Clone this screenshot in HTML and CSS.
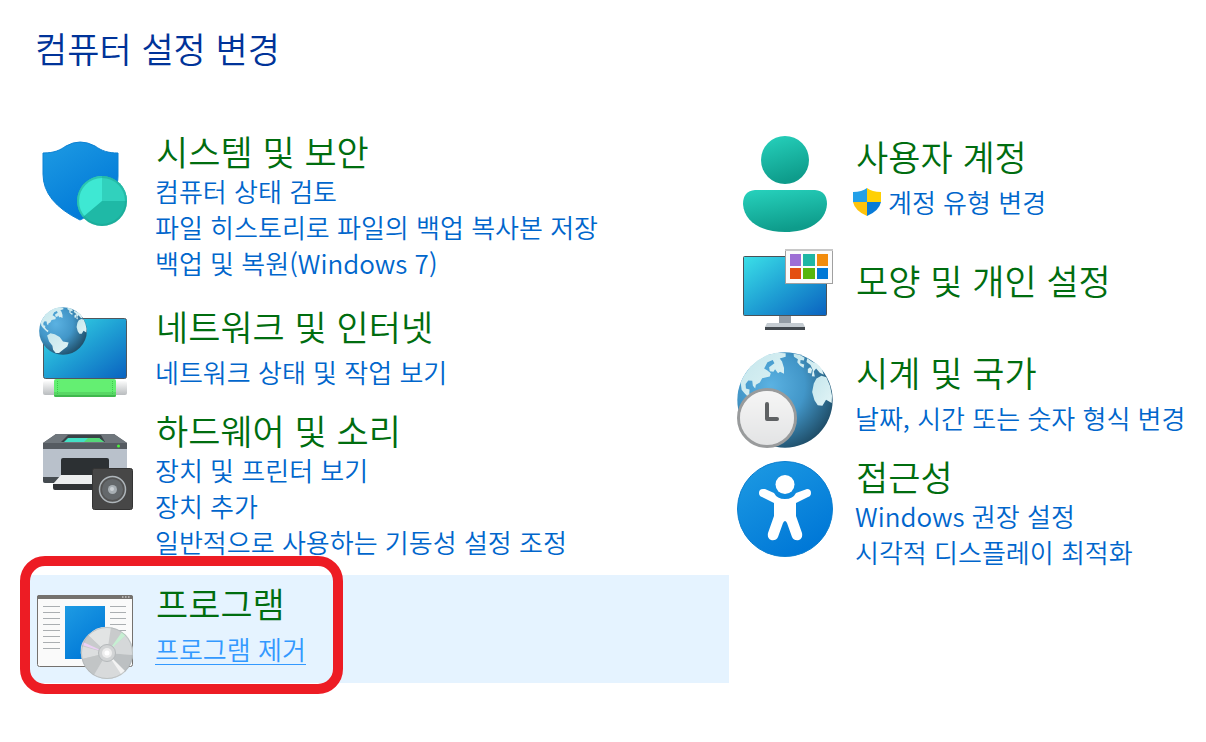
FILE: index.html
```html
<!DOCTYPE html>
<html lang="ko">
<head>
<meta charset="utf-8">
<meta name="viewport" content="width=device-width, initial-scale=1">
<title>컴퓨터 설정 변경</title>
<link rel="stylesheet" href="styles.css">
</head>
<body>
<svg class="defs" aria-hidden="true">
  <defs>
    <linearGradient id="blue" x1="0" y1="0" x2=".6" y2="1"><stop offset="0" stop-color="#1e9be3"/><stop offset="1" stop-color="#0078d7"/></linearGradient>
    <linearGradient id="screen" x1="0" y1="0" x2="1" y2="1"><stop offset="0" stop-color="#3be0e8"/><stop offset=".5" stop-color="#1fa0d4"/><stop offset="1" stop-color="#0a62c0"/></linearGradient>
    <linearGradient id="teal" x1="0" y1="0" x2=".3" y2="1"><stop offset="0" stop-color="#27d2bd"/><stop offset="1" stop-color="#0e9c8b"/></linearGradient>
    <linearGradient id="land" x1="0" y1="0" x2="1" y2="1"><stop offset="0" stop-color="#c4e6ec"/><stop offset="1" stop-color="#e2f4f6"/></linearGradient>
    <radialGradient id="sea" cx=".35" cy=".35" r=".72"><stop offset="0" stop-color="#5bb2e2"/><stop offset=".5" stop-color="#4296c8"/><stop offset="1" stop-color="#1e4c66"/></radialGradient>
    <linearGradient id="silver" x1="0" y1="0" x2="0" y2="1"><stop offset="0" stop-color="#fbfbfb"/><stop offset="1" stop-color="#b9bcbf"/></linearGradient>
    <symbol id="globe" viewBox="37 36 288 290">
      <circle cx="181" cy="181" r="144" fill="url(#sea)"/>
      <g fill="url(#land)">
        <path d="M50 150L47 128 57 108 75 82 98 62 125 46 155 38 183 40V50L165 56 172 65 178 84V102L166 96 160 100 151 88 146 96 135 94 133 82 149 70 144 60 128 67 122 78 118 86 128 92 138 100 135 110 125 112 112 115 105 128 93 135 91 146 84 138 82 123 70 122 62 133 63 146 74 149 73 161 82 172 94 180 88 188 70 172 58 160Z"/>
        <path d="M85 208L105 194 131 200 161 218 181 244 215 250 207 274 181 294 157 314 137 314 121 294 117 270 97 244Z"/>
        <path d="M207 41L225 44 240 53 238 62 228 60 227 70 239 74 237 84 226 77 218 67 220 58 208 50ZM250 87L257 82 263 88 260 101 250 99ZM248 55L264 66 277 71 293 89 298 105 286 99 275 86 268 94 271 110 262 109 265 90 258 75 246 66Z"/>
        <path d="M268 131L276 116 291 108 306 112 317 139 323 168 322 190 305 180 294 198 280 197 270 182 263 157Z"/>
      </g>
    </symbol>
  </defs>
</svg>
<main class="page">
  <h1 class="title">컴퓨터 설정 변경</h1>
  <div class="columns">
    <div class="column column-main">
      <section class="item item-security">
        <svg class="icon" viewBox="37 136 96 96" aria-hidden="true">
          <path d="M43 153C55 153 60 150 66 146Q80 138 95 146C102 151 108 153 118 153V176C118 198 99 211 80 220Q43 202 43 174Z" fill="url(#blue)" stroke="#0c81d3"/>
          <circle cx="102" cy="201" r="25" fill="#1fb9a6"/>
          <path d="M102 201V176A25 25 0 0 0 83 217Z" fill="#3ee8d3"/>
          <path d="M102 201V176A25 25 0 0 1 127 201Z" fill="#31d1bd"/>
          <circle cx="102" cy="201" r="24" fill="none" stroke="#19a392" stroke-opacity=".5" stroke-width="2"/>
        </svg>
        <div class="text">
          <h2><a href="#">시스템 및 보안</a></h2>
          <ul><li><a href="#">컴퓨터 상태 검토</a></li><li><a href="#">파일 히스토리로 파일의 백업 복사본 저장</a></li><li><a href="#">백업 및 복원(Windows 7)</a></li></ul>
        </div>
      </section>
      <section class="item item-network single">
        <svg class="icon" viewBox="37 304 96 96" aria-hidden="true">
          <rect x="43.500" y="318.500" width="83" height="60" rx="2" fill="url(#screen)" stroke="#50575d"/>
          <rect x="43" y="381" width="84" height="14" rx="2" fill="url(#silver)"/>
          <rect x="54" y="379" width="62" height="18" rx="2" fill="#64ef72"/>
          <path d="M54 392H116V395Q116 397 114 397H56Q54 397 54 395Z" fill="#58d765"/>
          <path d="M54 395H116Q116 397 114 397H56Q54 397 54 395Z" fill="#3fb84d"/>
          <path d="M57.500 381V395M112.500 381V395" stroke="#41c94f" stroke-dasharray="1 1"/>
          <use href="#globe" x="39" y="307" width="48" height="48"/>
        </svg>
        <div class="text">
          <h2><a href="#">네트워크 및 인터넷</a></h2>
          <ul><li><a href="#">네트워크 상태 및 작업 보기</a></li></ul>
        </div>
      </section>
      <section class="item item-hardware">
        <svg class="icon" viewBox="37 424 96 96" aria-hidden="true">
          <path d="M43 448H127V481Q127 483 125 483H45Q43 483 43 481Z" fill="#b9c1cb"/>
          <path d="M43 448V443L56 434H114L127 443V449H43Z" fill="#555b61"/>
          <path d="M43 443L56 434H114L127 443Z" fill="#6f767c"/>
          <path d="M68 435H101L105 442H61Z" fill="#3a4146"/>
          <path d="M68 438H99L104 442H64Z" fill="#44e1c6"/>
          <path d="M88 438H99L104 442H84Z" fill="#55d879"/>
          <circle cx="118.500" cy="446" r="1.500" fill="#4cf33b"/>
          <path d="M43 477H61V483H45Q43 483 43 481Z" fill="#454b50"/>
          <path d="M61 460Q61 458 63 458H107Q109 458 109 460V483H61Z" fill="#2c3033"/>
          <path d="M61 475H93V484H53Z" fill="#eceeef"/><path d="M53 484H93V490H55Q53 490 53 488Z" fill="#303336"/>
          <rect x="92.500" y="468.500" width="40" height="41" rx="2" fill="#474747" stroke="#343434"/>
          <circle cx="112.500" cy="489.500" r="13" fill="#545454" stroke="#aeb5ba" stroke-width="1.500"/>
          <circle cx="112.500" cy="489.500" r="10.500" fill="#64686b"/>
          <circle cx="112.500" cy="489.500" r="4.500" fill="#a8afb4"/><circle cx="112" cy="489" r="2" fill="#cbd0d4"/>
        </svg>
        <div class="text">
          <h2><a href="#">하드웨어 및 소리</a></h2>
          <ul><li><a href="#">장치 및 프린터 보기</a></li><li><a href="#">장치 추가</a></li><li><a href="#">일반적으로 사용하는 기동성 설정 조정</a></li></ul>
        </div>
      </section>
      <section class="item item-programs single">
        <svg class="icon icon-wide" viewBox="37 595 96 84" aria-hidden="true">
          <rect x="37.500" y="595.500" width="95" height="71" rx="2" fill="#fafafa" stroke="#74716e"/>
          <path d="M37 599V597Q37 595 39 595H131Q133 595 133 597V599Z" fill="#74716e"/>
          <path d="M122 597H130" stroke="#eee" stroke-dasharray="1.500 1.500"/>
          <path d="M43 606.500H60M43 612.500H60M43 618.500H60M43 624.500H60M43 630.500H60M43 636.500H60M43 642.500H60M43 648.500H60M110 606.500H126M110 612.500H126M110 618.500H126M110 624.500H126M110 630.500H126" stroke="#aaaeb1"/>
          <rect x="65" y="606" width="40" height="53" fill="url(#blue)"/>
          <circle cx="107" cy="653" r="26" fill="#c9cbcc"/>
          <path d="M107 653L88 635A26 26 0 0 1 111 627Z" fill="#e2e4e4"/>
          <path d="M107 653L81 646A26 26 0 0 1 88 635Z" fill="#c8cbcc"/>
          <path d="M107 653L82 659A26 26 0 0 1 81 646Z" fill="#dcdedf"/>
          <path d="M107 653L94 675A26 26 0 0 1 82 659Z" fill="#c2c5c6"/>
          <path d="M107 653L125 672A26 26 0 0 1 94 675Z" fill="#d8dadb"/>
          <path d="M107 653L133 655A26 26 0 0 1 125 672Z" fill="#bcc0c2"/>
          <path d="M107 653L126 635A26 26 0 0 1 133 655Z" fill="#d5d8d9"/>
          <path d="M107 653L122 632 126 635Z" fill="#c6efd2"/><path d="M107 653L82 645 83 642Z" fill="#ecd0f5"/>
          <path d="M107 653L121 674 125 671Z" fill="#f3f3f3"/>
          <circle cx="107" cy="653" r="25.500" fill="none" stroke="#aab0b3" stroke-opacity=".6"/>
          <circle cx="107" cy="653" r="8.500" fill="#d2d4d5" stroke="#b4b8ba"/><circle cx="107" cy="653" r="5" fill="#eee"/><circle cx="107" cy="653" r="2.500" fill="#fff"/>
        </svg>
        <div class="text">
          <h2><a href="#">프로그램</a></h2>
          <ul><li><a class="hovered" href="#">프로그램 제거</a></li></ul>
        </div>
        <span class="marker"></span>
      </section>
    </div>
    <div class="column column-side">
      <section class="item item-accounts single">
        <svg class="icon" viewBox="737 136 96 96" aria-hidden="true">
          <circle cx="785" cy="160" r="24" fill="url(#teal)"/>
          <path d="M755 190H815Q827 191 827 204C826 222 808 232 785 232S744 222 743 204Q743 191 755 190Z" fill="url(#teal)"/>
        </svg>
        <div class="text">
          <h2><a href="#">사용자 계정</a></h2>
          <ul><li><a class="shielded" href="#"><svg class="shield" viewBox="0 0 28 28" aria-hidden="true">
            <path d="M14 0Q9 4 0 4V14H14Z" fill="#23a0e8"/><path d="M14 0Q19 4 28 4V14H14Z" fill="#ffd004"/>
            <path d="M0 14H14V28Q2 23 0 14Z" fill="#ffc30b"/><path d="M28 14H14V28Q26 23 28 14Z" fill="#087bd8"/>
          </svg>계정 유형 변경</a></li></ul>
        </div>
      </section>
      <section class="item item-personal">
        <svg class="icon" viewBox="737 242 96 96" aria-hidden="true">
          <rect x="743.500" y="256.500" width="83" height="59" rx="1" fill="url(#screen)" stroke="#4a5258"/>
          <path d="M779 316H791V325H779Z" fill="#939ca5"/><path d="M767 323H803L805 327H765Z" fill="#c4cbd1"/><path d="M765 327H805V330H765Z" fill="#42484e"/>
          <rect x="785.500" y="249.500" width="47" height="34" fill="#fbfbfb" stroke="#a0a0a0"/>
          <path d="M785 250H833" stroke="#c8c8c8" stroke-width="2"/>
          <path d="M790 254h11v12h-11z" fill="#9d6fd5"/><path d="M803 254h12v12h-12z" fill="#1eb6a4"/><path d="M817 254h11v12h-11z" fill="#f28c0c"/>
          <path d="M790 268h11v11h-11z" fill="#e44f12"/><path d="M803 268h12v11h-12z" fill="#57b60e"/><path d="M817 268h11v11h-11z" fill="#0079d6"/>
        </svg>
        <div class="text"><h2><a href="#">모양 및 개인 설정</a></h2></div>
      </section>
      <section class="item item-clock single">
        <svg class="icon" viewBox="737 352 96 96" aria-hidden="true">
          <use href="#globe" x="737" y="352" width="96" height="96"/>
          <circle cx="767" cy="418" r="28.500" fill="url(#silver)" stroke="#999b9c" stroke-width="3"/>
          <circle cx="767" cy="418" r="27" fill="#f3f4f4" fill-opacity=".7"/>
          <path d="M767 404V419H777" fill="none" stroke="#5e6163" stroke-width="4" stroke-linecap="round" stroke-linejoin="round"/>
        </svg>
        <div class="text">
          <h2><a href="#">시계 및 국가</a></h2>
          <ul><li><a href="#">날짜, 시간 또는 숫자 형식 변경</a></li></ul>
        </div>
      </section>
      <section class="item item-access">
        <svg class="icon" viewBox="737 461 96 96" aria-hidden="true">
          <circle cx="785" cy="509" r="47.500" fill="url(#blue)" stroke="#0c7fd0"/>
          <circle cx="785" cy="484.500" r="9.500" fill="#fff"/>
          <path d="M763 489Q759 489 759 493 759 496 762 497L774 503V516L768 533Q767 538 771 540 776 541 778 537L783 523Q785 519 787 523L792 537Q794 541 799 540 803 538 802 533L796 516V503L808 497Q811 496 811 493 811 489 807 489L796 493Q793 499 785 499T774 493L765 489Z" fill="#fff"/>
        </svg>
        <div class="text">
          <h2><a href="#">접근성</a></h2>
          <ul><li><a href="#">Windows 권장 설정</a></li><li><a href="#">시각적 디스플레이 최적화</a></li></ul>
        </div>
      </section>
    </div>
  </div>
</main>
</body>
</html>
```
FILE: styles.css
```css
* { box-sizing: border-box; }

body {
  margin: 0;
  background: #fff;
  font-family: "Noto Sans CJK KR", sans-serif;
  font-weight: 350;
}

h1, h2, ul { margin: 0; padding: 0; font-weight: inherit; }
ul { list-style: none; }
a { color: inherit; text-decoration: none; }

.defs { position: absolute; width: 0; height: 0; }

.page { padding: 26px 8px 40px 30px; }

.title {
  padding-left: 5px;
  color: #003399;
  font-size: 35px;
  line-height: 44px;
}

.columns {
  display: grid;
  grid-template-columns: 699fr 469fr;
  padding-top: 61px;
}

.column { display: flex; flex-direction: column; min-width: 0; }
.column-side { padding: 5px 0 0 8px; }

.item {
  position: relative;
  display: flex;
  align-items: flex-start;
  gap: 22px;
}
.column-main .item { padding-left: 7px; }

.icon { flex: none; width: 96px; height: 96px; }
.icon-wide { height: 84px; }
.text { flex: 1; min-width: 0; white-space: nowrap; }

h2 {
  padding: 0 0 2px 1px;
  color: #006d0f;
  font-size: 35px;
  line-height: 40px;
}

li {
  color: #0066cc;
  font-size: 26px;
  line-height: 36px;
}
.single ul { padding-top: 6px; }

.item-security .icon { margin-top: 5px; }
.item-network { margin-top: 23px; }
.item-network .text { padding-top: 2px; }
.item-hardware { margin-top: 10px; }
.item-hardware .icon { margin-top: 14px; }
.item-programs {
  margin-top: 15px;
  padding-top: 8px;
  padding-bottom: 4px;
  background: #e5f3ff;
}
.item-programs .icon { margin-top: 12px; }

.item-personal { margin-top: 10px; }
.item-personal .text { padding-top: 18px; }
.item-clock { margin-top: 14px; }
.item-access { margin-top: 8px; }
.item-access .icon { margin-top: 5px; }

.hovered {
  display: inline-block;
  height: 34px;
  border-bottom: 1px solid #3399ff;
  color: #3399ff;
}

.shielded { display: flex; align-items: center; gap: 7px; }
.shield { width: 28px; height: 28px; margin-left: -2px; }

.marker {
  position: absolute;
  top: -19px;
  bottom: -11px;
  left: -10px;
  width: 323px;
  border: 10px solid #ed1c24;
  border-radius: 25px;
  pointer-events: none;
}
```
